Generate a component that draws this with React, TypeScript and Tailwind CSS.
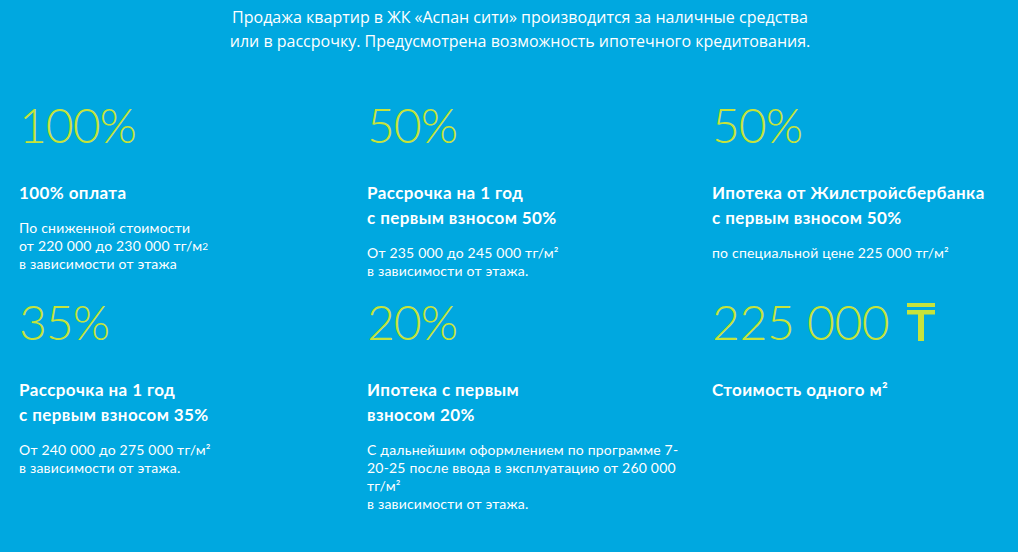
import React from 'react';

const numFont = { fontFamily: 'Lato, "Open Sans", sans-serif' };

function Tenge() {
  return (
    <svg width="28" height="38" viewBox="0 0 28 38" className="inline-block ml-[18px] align-baseline relative top-[1px]">
      <rect x="0" y="0" width="28" height="4" fill="#c6e33b" />
      <rect x="0" y="7" width="28" height="4.5" fill="#c6e33b" />
      <rect x="11" y="7" width="6" height="31" fill="#c6e33b" />
    </svg>
  );
}

type Item = {
  big: React.ReactNode;
  title: React.ReactNode;
  text: React.ReactNode;
};

const items: Item[] = [
  {
    big: '100%',
    title: '100% оплата',
    text: (
      <>
        По сниженной стоимости
        <br />
        от 220 000 до 230 000 тг/м<sup className="text-[10px] relative -top-[1px]">2</sup>
        <br />
        в зависимости от этажа
      </>
    ),
  },
  {
    big: '50%',
    title: (
      <>
        Рассрочка на 1 год
        <br />с первым взносом 50%
      </>
    ),
    text: (
      <>
        От 235 000 до 245 000 тг/м²
        <br />в зависимости от этажа.
      </>
    ),
  },
  {
    big: '50%',
    title: (
      <>
        Ипотека от Жилстройсбербанка
        <br />с первым взносом 50%
      </>
    ),
    text: <>по специальной цене 225 000 тг/м²</>,
  },
  {
    big: '35%',
    title: (
      <>
        Рассрочка на 1 год
        <br />с первым взносом 35%
      </>
    ),
    text: (
      <>
        От 240 000 до 275 000 тг/м²
        <br />в зависимости от этажа.
      </>
    ),
  },
  {
    big: '20%',
    title: (
      <>
        Ипотека с первым
        <br />
        взносом 20%
      </>
    ),
    text: (
      <>
        С дальнейшим оформлением по программе 7-
        <br />
        20-25 после ввода в эксплуатацию от 260 000
        <br />
        тг/м²
        <br />
        в зависимости от этажа.
      </>
    ),
  },
  {
    big: (
      <>
        <span className="tracking-[-0.4px]">225 000</span>
        <Tenge />
      </>
    ),
    title: <>Стоимость одного м²</>,
    text: null,
  },
];

export default function App() {
  return (
    <div className="min-h-screen w-full overflow-hidden bg-[#00a8e0] text-white" style={numFont}>
      <div className="w-[1040px]">
        <p
          className="pt-[5px] text-center text-[16px] leading-[24px] text-white"
          style={{ fontFamily: '"Open Sans", sans-serif' }}
        >
          Продажа квартир в ЖК «Аспан сити» производится за наличные средства
          <br />
          или в рассрочку. Предусмотрена возможность ипотечного кредитования.
        </p>

        <div className="mt-[44px] grid grid-cols-[348px_345px_1fr] gap-y-[14px] pl-[19px]">
          {items.map((it, i) => (
            <div key={i} className="flex flex-col">
              <div className="text-[48px] leading-[56px] font-light text-[#c6e33b] tracking-[-1px]">
                {it.big}
              </div>
              <div className="mt-[27px] text-[17px] leading-[25px] font-bold tracking-[0.4px]">{it.title}</div>
              {it.text && (
                <div className="mt-[14px] text-[14px] leading-[18px] tracking-[0.2px]">{it.text}</div>
              )}
            </div>
          ))}
        </div>
      </div>
    </div>
  );
}
